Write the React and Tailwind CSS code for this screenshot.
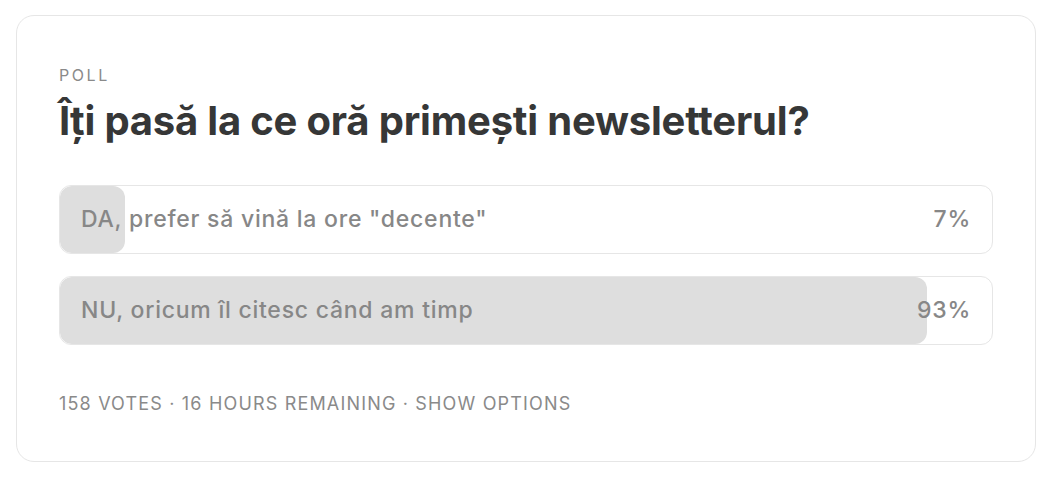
import React from 'react';

const options = [
  { label: 'DA, prefer să vină la ore "decente"', percent: 7 },
  { label: 'NU, oricum îl citesc când am timp', percent: 93 },
];

const PollOption = ({ label, percent }) => (
  <div className="relative h-[69px] rounded-[12px] border-[1.5px] border-[#e6e6e6] overflow-hidden">
    {/* fill bar */}
    <div
      className="absolute left-0 top-0 bottom-0 rounded-[12px] bg-[#dedede]"
      style={{ width: `${percent}%` }}
    />
    <div className="relative flex h-full items-center justify-between px-[21px] text-[23px] font-medium tracking-[0.033em] text-[#878787]">
      <span>{label}</span>
      <span>{percent}%</span>
    </div>
  </div>
);

const App = () => {
  return (
    <div className="min-h-screen bg-white pt-[15px] pl-[16px] font-['Inter',sans-serif]">
      <div className="w-[1020px] h-[447px] rounded-[18px] border-[1.5px] border-[#e6e6e6] px-[42px] pt-[49px]">
        <p className="text-[16px] leading-[20px] tracking-[0.16em] text-[#8a8a8a]">POLL</p>
        <h1 className="mt-[12px] text-[40px] leading-[48px] font-bold tracking-[-0.005em] text-[#363737]">
          Îți pasă la ce oră primești newsletterul?
        </h1>

        <div className="mt-[40px] flex flex-col gap-[22px]">
          {options.map((o, i) => (
            <PollOption key={i} label={o.label} percent={o.percent} />
          ))}
        </div>

        <p className="mt-[47px] text-[18px] leading-[24px] tracking-[0.065em] text-[#8a8a8a]">
          158 VOTES · 16 HOURS REMAINING · SHOW OPTIONS
        </p>
      </div>
    </div>
  );
};

export default App;
